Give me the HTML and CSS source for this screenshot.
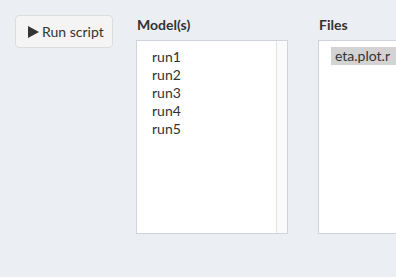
FILE: index.html
```html
<!DOCTYPE html>
<html>
<head>
<meta charset="utf-8">
<link rel="stylesheet" href="styles.css">
</head>
<body>
<div class="page">
  <div class="btn-col">
    <button class="btn"><svg class="play" width="11" height="12" viewBox="0 0 11 12"><path d="M0 0 L11 6 L0 12 Z" fill="#333"/></svg><span>Run script</span></button>
  </div>
  <div class="col models">
    <div class="label">Model(s)</div>
    <div class="box">
      <div class="list">
        <div class="opt">run1</div>
        <div class="opt">run2</div>
        <div class="opt">run3</div>
        <div class="opt">run4</div>
        <div class="opt">run5</div>
      </div>
      <div class="scroll"></div>
    </div>
  </div>
  <div class="col files">
    <div class="label">Files</div>
    <div class="box box-open">
      <div class="list list-files">
        <div class="opt selected">eta.plot.r</div>
      </div>
    </div>
  </div>
</div>
</body>
</html>
```
FILE: styles.css
```css
html, body {
  margin: 0;
  padding: 0;
  background: #ebeef3;
  font-family: "Lato", "Open Sans", sans-serif;
  color: #333;
  overflow: hidden;
}
.page {
  display: flex;
  align-items: flex-start;
  padding: 15px 0 0 15px;
  width: 396px;
  height: 277px;
  box-sizing: border-box;
}
.btn {
  width: 98px;
  height: 33px;
  box-sizing: border-box;
  border: 1px solid #dcdcdc;
  border-radius: 4px;
  background: #f4f4f4;
  font-family: inherit;
  font-size: 14px;
  color: #333;
  padding: 0 0 0 12px;
  display: flex;
  align-items: center;
  gap: 3px;
}
.play {
  display: block;
  flex-shrink: 0;
}
.col {
  display: flex;
  flex-direction: column;
  flex-shrink: 0;
}
.models {
  margin-left: 23px;
}
.files {
  margin-left: 30px;
  flex: 1 1 auto;
  flex-shrink: 1;
  min-width: 0;
}
.label {
  font-weight: bold;
  font-size: 14px;
  line-height: 20px;
  height: 25px;
  padding-left: 1px;
}
.box {
  display: flex;
  width: 152px;
  height: 194px;
  box-sizing: border-box;
  border: 1px solid #cfd3da;
  background: #fff;
}
.box-open {
  width: auto;
  border-right: none;
}
.list {
  flex: 1;
  min-width: 0;
  padding: 7px 0 0 15px;
  font-size: 14px;
  line-height: 18px;
}
.list-files {
  padding: 6px 0 0 12px;
}
.opt {
  white-space: nowrap;
}
.selected {
  background: #d3d3d3;
  padding-left: 4px;
}
.scroll {
  width: 10px;
  border-left: 1px solid #e3e3e3;
  background: #fafafa;
}
```
